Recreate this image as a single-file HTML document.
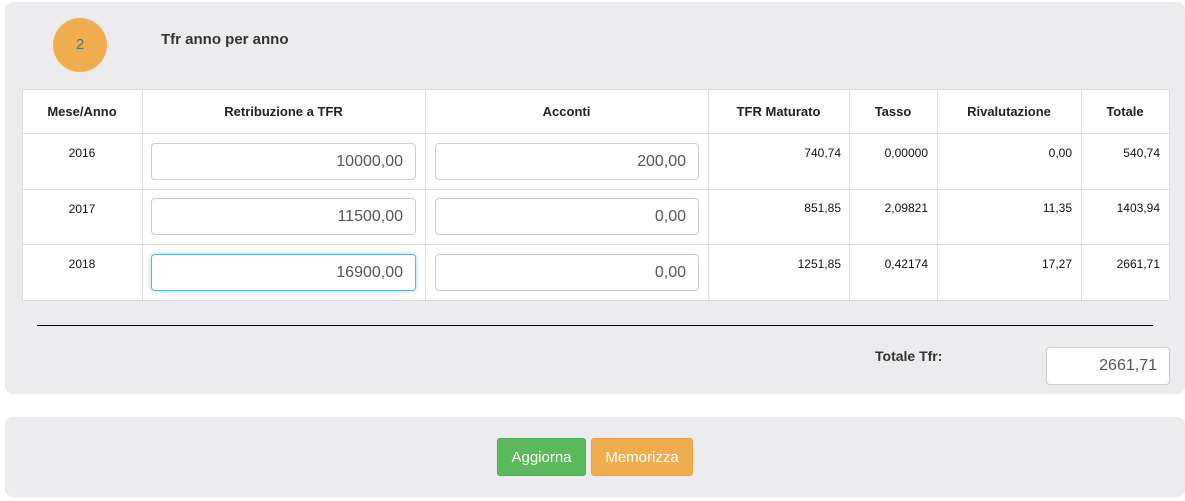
<!DOCTYPE html>
<html><head><style>
body{margin:0;width:1185px;height:501px;background:#fff;font-family:"Liberation Sans",Arial,sans-serif;position:relative;overflow:hidden;color:#000}
.a{position:absolute}
.p{background:#ececee;border-radius:8px}
.c{position:absolute;width:1px;background:#ddd}
.r{position:absolute;height:1px;background:#ddd;left:22px;width:1147px}
.h{position:absolute;top:104px;font-size:13px;font-weight:bold;text-align:center;color:#222}
.t{position:absolute;font-size:12px;color:#111}
.in{position:absolute;background:#fff;border:1px solid #ccc;border-radius:4px;box-sizing:border-box;height:37px;font-size:16px;color:#555;text-align:right;padding-right:12px;line-height:35px}
.b{position:absolute;top:438px;height:38px;border-radius:3px;color:#fff;font-size:15px;line-height:38px;text-align:center;box-sizing:border-box}
</style></head><body>
<div class="a p" style="left:5px;top:2px;width:1180px;height:392px"></div>
<div class="a p" style="left:5px;top:417px;width:1180px;height:80px"></div>
<div class="a" style="left:53px;top:18px;width:54px;height:54px;border-radius:50%;background:#f0ad4e;color:#5a6a80;font-size:15px;text-align:center;line-height:54px">2</div>
<div class="a" style="left:161px;top:31px;font-size:15px;font-weight:bold;color:#333">Tfr anno per anno</div>
<div class="a" style="left:22px;top:89px;width:1147px;height:211px;background:#fff;border-bottom:1px solid #ddd"></div>
<div class="r" style="top:89px"></div><div class="r" style="top:133px"></div><div class="r" style="top:189px"></div><div class="r" style="top:244px"></div>
<div class="c" style="left:22px;top:89px;height:211px"></div>
<div class="c" style="left:142px;top:89px;height:211px"></div>
<div class="c" style="left:425px;top:89px;height:211px"></div>
<div class="c" style="left:708px;top:89px;height:211px"></div>
<div class="c" style="left:849px;top:89px;height:211px"></div>
<div class="c" style="left:937px;top:89px;height:211px"></div>
<div class="c" style="left:1081px;top:89px;height:211px"></div>
<div class="c" style="left:1169px;top:89px;height:211px"></div>
<div class="h" style="left:22px;width:120px">Mese/Anno</div>
<div class="h" style="left:142px;width:283px">Retribuzione a TFR</div>
<div class="h" style="left:425px;width:283px">Acconti</div>
<div class="h" style="left:708px;width:141px">TFR Maturato</div>
<div class="h" style="left:849px;width:88px">Tasso</div>
<div class="h" style="left:937px;width:144px">Rivalutazione</div>
<div class="h" style="left:1081px;width:88px">Totale</div>

<div class="t" style="left:22px;width:120px;text-align:center;top:146px">2016</div>
<div class="t" style="left:22px;width:120px;text-align:center;top:202px">2017</div>
<div class="t" style="left:22px;width:120px;text-align:center;top:257px">2018</div>

<div class="in" style="left:151px;top:143px;width:265px">10000,00</div>
<div class="in" style="left:435px;top:143px;width:264px">200,00</div>
<div class="in" style="left:151px;top:198px;width:265px">11500,00</div>
<div class="in" style="left:435px;top:198px;width:264px">0,00</div>
<div class="in" style="left:151px;top:254px;width:265px;border-color:#66afe9;box-shadow:0 0 4px rgba(102,175,233,.6)">16900,00</div>
<div class="in" style="left:435px;top:254px;width:264px">0,00</div>

<div class="t" style="left:708px;width:133px;text-align:right;top:146px">740,74</div>
<div class="t" style="left:849px;width:79px;text-align:right;top:146px">0,00000</div>
<div class="t" style="left:937px;width:135px;text-align:right;top:146px">0,00</div>
<div class="t" style="left:1081px;width:79px;text-align:right;top:146px">540,74</div>
<div class="t" style="left:708px;width:133px;text-align:right;top:201px">851,85</div>
<div class="t" style="left:849px;width:79px;text-align:right;top:201px">2,09821</div>
<div class="t" style="left:937px;width:135px;text-align:right;top:201px">11,35</div>
<div class="t" style="left:1081px;width:79px;text-align:right;top:201px">1403,94</div>
<div class="t" style="left:708px;width:133px;text-align:right;top:257px">1251,85</div>
<div class="t" style="left:849px;width:79px;text-align:right;top:257px">0,42174</div>
<div class="t" style="left:937px;width:135px;text-align:right;top:257px">17,27</div>
<div class="t" style="left:1081px;width:79px;text-align:right;top:257px">2661,71</div>

<div class="a" style="left:37px;top:325px;width:1116px;height:1px;background:#000"></div>
<div class="a" style="left:875px;top:348px;font-size:14px;font-weight:bold;color:#333">Totale Tfr:</div>
<div class="in" style="left:1046px;top:347px;width:124px;height:38px;line-height:36px">2661,71</div>

<div class="b" style="left:497px;width:89px;background:#5cb85c;border:1px solid #4cae4c">Aggiorna</div>
<div class="b" style="left:591px;width:102px;background:#f0ad4e;border:1px solid #eea236">Memorizza</div>
</body></html>
